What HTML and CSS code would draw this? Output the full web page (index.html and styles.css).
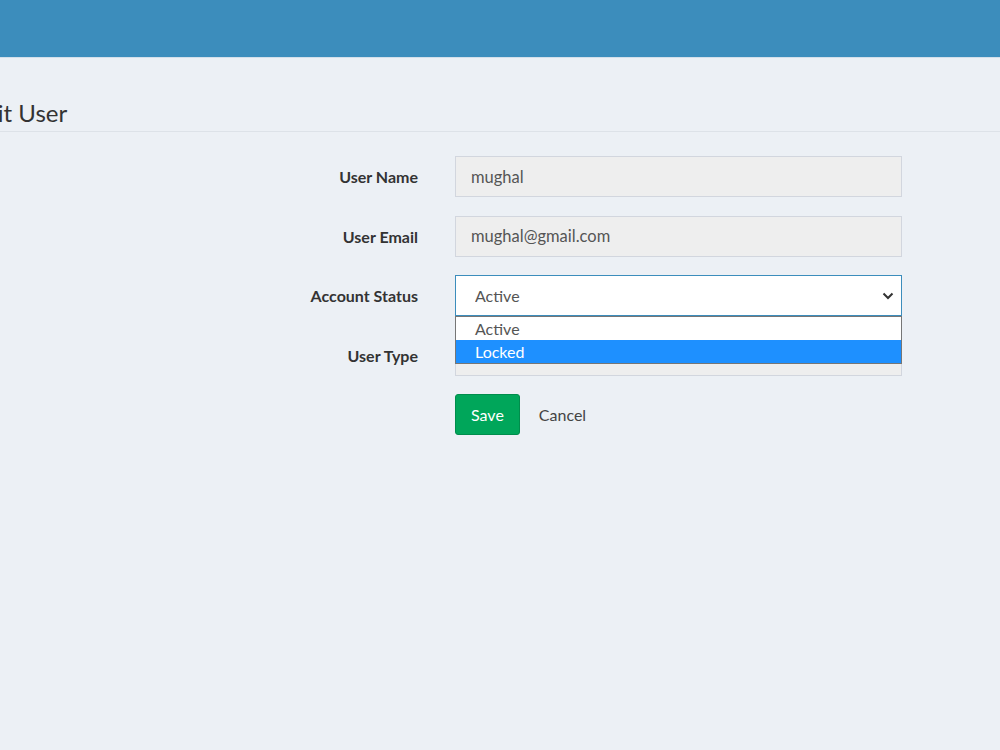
FILE: index.html
```html
<!DOCTYPE html>
<html lang="en">
<head>
    <meta charset="UTF-8">
    <meta name="viewport" content="width=device-width, initial-scale=1.0">
    <title>Edit User</title>
    <link rel="stylesheet" href="styles.css">
</head>
<body>
    <header class="top-bar"></header>

    <div class="content">
        <h1 class="page-title">Edit User</h1>

        <form class="user-form">
            <label class="form-label" for="username">User Name</label>
            <input class="form-input" type="text" id="username" value="mughal" disabled>

            <label class="form-label" for="email">User Email</label>
            <input class="form-input" type="text" id="email" value="mughal@gmail.com" disabled>

            <label class="form-label" for="status">Account Status</label>
            <div class="select-wrap">
                <select class="form-select" id="status">
                    <option>Active</option>
                    <option>Locked</option>
                </select>
                <svg class="select-arrow" width="12" height="8" viewBox="0 0 12 8">
                    <path d="M1.5 1.5 L6 6 L10.5 1.5" fill="none" stroke="#333" stroke-width="2"/>
                </svg>
                <ul class="select-menu">
                    <li>Active</li>
                    <li class="selected">Locked</li>
                </ul>
            </div>

            <label class="form-label" for="usertype">User Type</label>
            <input class="form-input" type="text" id="usertype" value="" disabled>

            <span></span>
            <div class="actions">
                <button type="button" class="btn-save">Save</button>
                <a href="#" class="btn-cancel">Cancel</a>
            </div>
        </form>
    </div>
</body>
</html>
```

FILE: styles.css
```css
body {
    margin: 0;
    padding: 0;
    font-family: Lato, "Open Sans", sans-serif;
    background-color: #ecf0f5;
    color: #333;
    height: 100vh;
    overflow: hidden;
}

.top-bar {
    height: 57px;
    background-color: #3c8dbc;
    border-bottom: 1px solid #d2dfea;
}

.page-title {
    margin: 0 0 0 -29px;
    padding: 41px 0 5px;
    font-size: 24px;
    font-weight: 400;
    line-height: 27px;
    color: #333;
    border-bottom: 1px solid #dde2e8;
}

.user-form {
    display: grid;
    grid-template-columns: 418px 447px;
    column-gap: 37px;
    row-gap: 18.5px;
    margin-top: 24px;
    align-items: center;
}

.form-label {
    text-align: right;
    font-size: 16px;
    font-weight: 700;
    color: #333;
}

.form-input,
.form-select {
    height: 41px;
    width: 100%;
    box-sizing: border-box;
    padding: 0 15px;
    font-family: inherit;
    font-size: 16.5px;
    color: #555;
    border: 1px solid #d2d6de;
    background-color: #eee;
    outline: none;
}

.select-wrap {
    position: relative;
}

.form-select {
    appearance: none;
    -webkit-appearance: none;
    font-size: 16px;
    background-color: #fff;
    border-color: #3c8dbc;
    padding-left: 19px;
}

.select-arrow {
    position: absolute;
    right: 8px;
    top: 17px;
}

.select-menu {
    position: absolute;
    left: 0;
    right: 0;
    top: 100%;
    margin: 0;
    padding: 0;
    list-style: none;
    background-color: #fff;
    border: 1px solid #767676;
    z-index: 2;
}

.select-menu li {
    height: 23px;
    line-height: 23px;
    padding-left: 19px;
    font-size: 16px;
    color: #555;
}

.select-menu li.selected {
    background-color: #1e90ff;
    color: #fff;
}

.actions {
    display: flex;
    align-items: center;
    gap: 19px;
}

.btn-save {
    height: 41px;
    padding: 0 15px;
    font-family: inherit;
    font-size: 16px;
    color: #fff;
    background-color: #00a65a;
    border: 1px solid #008d4c;
    border-radius: 3px;
    cursor: pointer;
}

.btn-cancel {
    font-size: 16px;
    color: #444;
    text-decoration: none;
}
```
